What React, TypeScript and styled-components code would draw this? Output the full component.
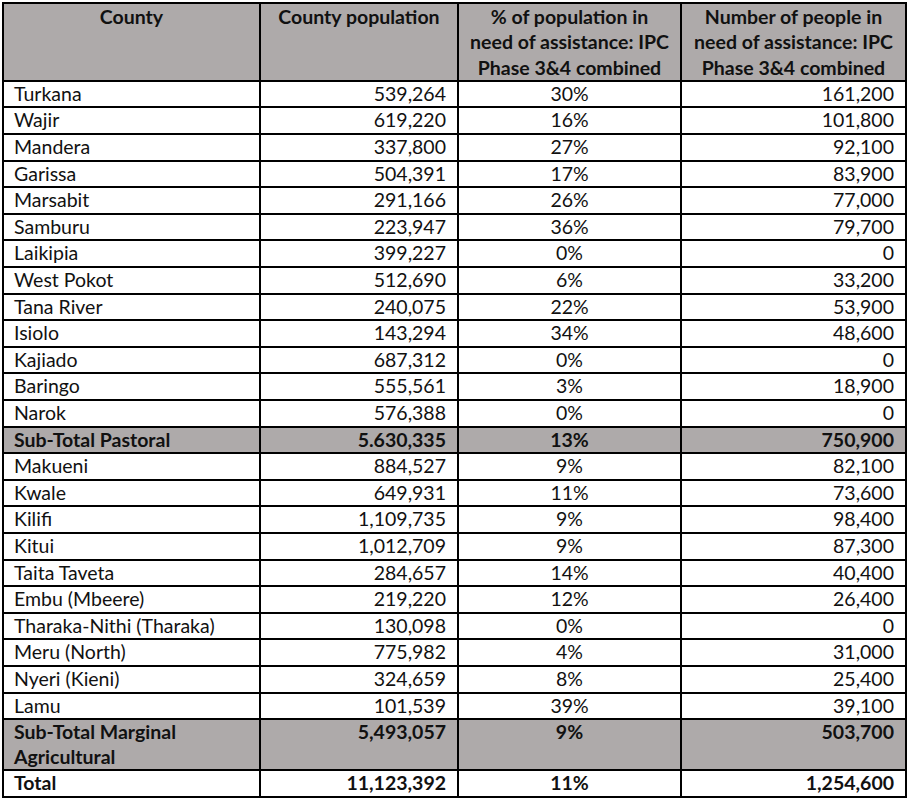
import React from "react";
import styled, { createGlobalStyle } from "styled-components";

const Global = createGlobalStyle`
  html, body { margin: 0; padding: 0; background: #ffffff; }
  body { font-family: Lato, "Open Sans", "Liberation Sans", sans-serif; color: #111; }
`;

const Page = styled.div`
  padding: 2px 0 0 2px;
`;

const Table = styled.table`
  border-collapse: collapse;
  table-layout: fixed;
  width: 903px;
  font-size: 19.5px;
`;

const HeadCell = styled.th`
  background: #aeaaaa;
  border: 2px solid #000;
  font-weight: 700;
  text-align: center;
  vertical-align: top;
  line-height: 25.3px;
  padding: 0 10px;
`;

type Variant = "normal" | "sub" | "total";

const Row = styled.tr<{ $variant: Variant }>`
  background: ${(p) => (p.$variant === "sub" ? "#aeaaaa" : "#ffffff")};
  font-weight: ${(p) => (p.$variant === "normal" ? 400 : 700)};
`;

const Cell = styled.td<{ $align: "left" | "right" | "center" }>`
  border: 2px solid #000;
  text-align: ${(p) => p.$align};
  vertical-align: top;
  line-height: 24.6px;
  padding: ${(p) => (p.$align === "left" ? "0 6px 0 10px" : p.$align === "right" ? "0 11px 0 6px" : "0 6px")};
  white-space: nowrap;
`;

const WrapCell = styled(Cell)`
  white-space: normal;
`;

type R = [string, string, string, string, Variant?];

const rows: R[] = [
  ["Turkana", "539,264", "30%", "161,200"],
  ["Wajir", "619,220", "16%", "101,800"],
  ["Mandera", "337,800", "27%", "92,100"],
  ["Garissa", "504,391", "17%", "83,900"],
  ["Marsabit", "291,166", "26%", "77,000"],
  ["Samburu", "223,947", "36%", "79,700"],
  ["Laikipia", "399,227", "0%", "0"],
  ["West Pokot", "512,690", "6%", "33,200"],
  ["Tana River", "240,075", "22%", "53,900"],
  ["Isiolo", "143,294", "34%", "48,600"],
  ["Kajiado", "687,312", "0%", "0"],
  ["Baringo", "555,561", "3%", "18,900"],
  ["Narok", "576,388", "0%", "0"],
  ["Sub-Total Pastoral", "5.630,335", "13%", "750,900", "sub"],
  ["Makueni", "884,527", "9%", "82,100"],
  ["Kwale", "649,931", "11%", "73,600"],
  ["Kilifi", "1,109,735", "9%", "98,400"],
  ["Kitui", "1,012,709", "9%", "87,300"],
  ["Taita Taveta", "284,657", "14%", "40,400"],
  ["Embu (Mbeere)", "219,220", "12%", "26,400"],
  ["Tharaka-Nithi (Tharaka)", "130,098", "0%", "0"],
  ["Meru (North)", "775,982", "4%", "31,000"],
  ["Nyeri (Kieni)", "324,659", "8%", "25,400"],
  ["Lamu", "101,539", "39%", "39,100"],
];

export default function App() {
  return (
    <Page>
      <Global />
      <Table>
        <colgroup>
          <col style={{ width: 257 }} />
          <col style={{ width: 198 }} />
          <col style={{ width: 223 }} />
          <col style={{ width: 225 }} />
        </colgroup>
        <thead>
          <tr>
            <HeadCell>County</HeadCell>
            <HeadCell>County population</HeadCell>
            <HeadCell>% of population in need of assistance: IPC Phase 3&amp;4 combined</HeadCell>
            <HeadCell>Number of people in need of assistance: IPC Phase 3&amp;4 combined</HeadCell>
          </tr>
        </thead>
        <tbody>
          {rows.map(([c, p, pct, n, v]) => (
            <Row key={c} $variant={v ?? "normal"}>
              <Cell $align="left">{c}</Cell>
              <Cell $align="right">{p}</Cell>
              <Cell $align="center">{pct}</Cell>
              <Cell $align="right">{n}</Cell>
            </Row>
          ))}
          <Row $variant="sub">
            <WrapCell $align="left">Sub-Total Marginal Agricultural</WrapCell>
            <Cell $align="right">5,493,057</Cell>
            <Cell $align="center">9%</Cell>
            <Cell $align="right">503,700</Cell>
          </Row>
          <Row $variant="total">
            <Cell $align="left">Total</Cell>
            <Cell $align="right">11,123,392</Cell>
            <Cell $align="center">11%</Cell>
            <Cell $align="right">1,254,600</Cell>
          </Row>
        </tbody>
      </Table>
    </Page>
  );
}
